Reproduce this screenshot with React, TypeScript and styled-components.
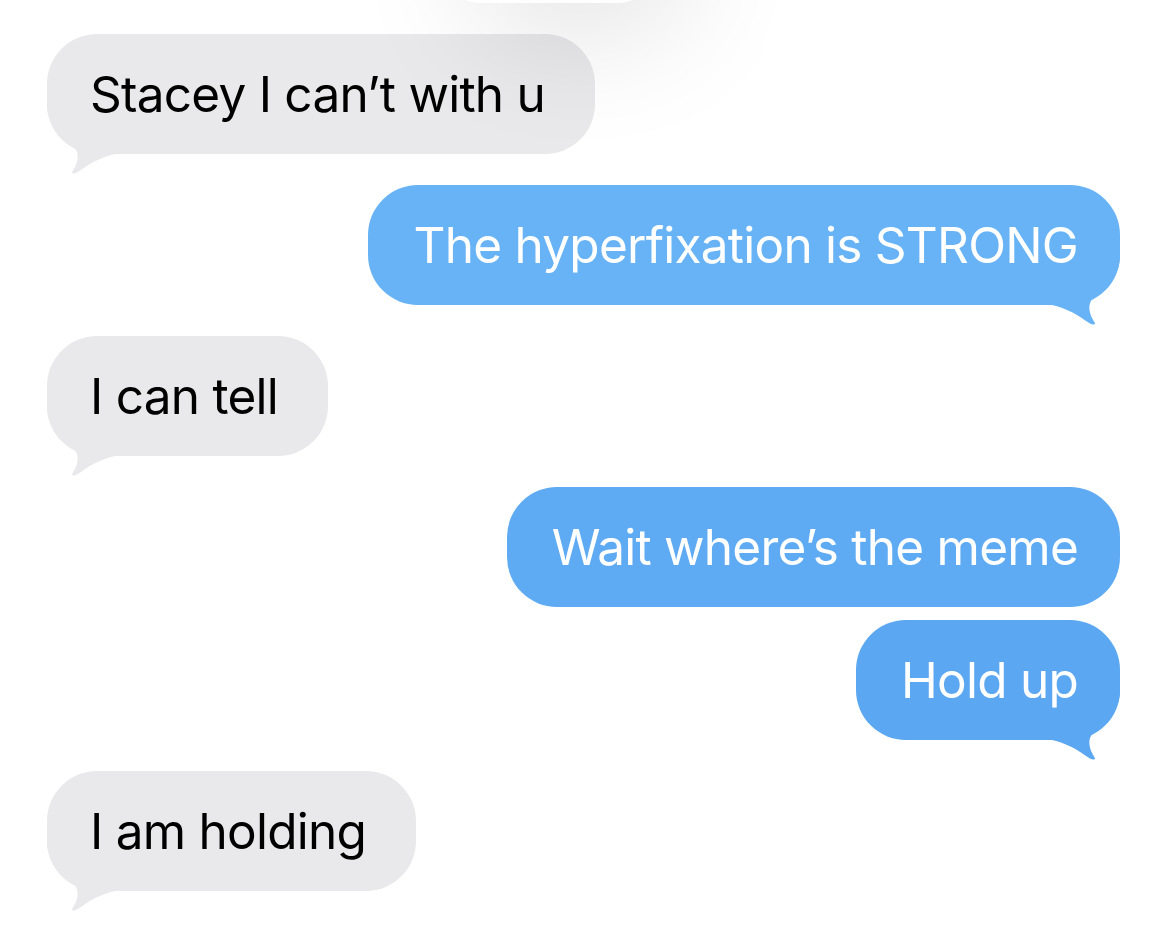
import React from "react";
import styled, { createGlobalStyle, css } from "styled-components";

const GlobalStyle = createGlobalStyle`
  html, body {
    margin: 0;
    padding: 0;
    background: #ffffff;
  }
  body {
    font-family: Inter, "Noto Sans", "Liberation Sans", sans-serif;
    -webkit-font-smoothing: antialiased;
  }
`;

// tail outlines, box is 80x72 sitting on the bubble's bottom corner
const TAIL_LEFT =
  "M0 0 L75 0 L75 49 C60 50 45 58 34 66 C30 69 25 71 25 68 C29 62 32 55 30 48 C27 40 15 32 6 22 C2 16 0 8 0 0 Z";
const TAIL_RIGHT =
  "M80 0 L5 0 L5 49 C20 50 35 58 46 66 C50 69 55 71 55 68 C51 62 48 55 50 48 C53 40 65 32 74 22 C78 16 80 8 80 0 Z";

const Screen = styled.div`
  position: relative;
  width: 1170px;
  height: 927px;
  overflow: hidden;
  background: #ffffff;
`;

const TopSheet = styled.div`
  position: absolute;
  top: -200px;
  left: 450px;
  width: 198px;
  height: 203px;
  border-radius: 28px;
  background: #ffffff;
  box-shadow: 30px 25px 130px rgba(0, 0, 0, 0.12);
  z-index: 2;
  pointer-events: none;
`;

const Thread = styled.div`
  display: flex;
  flex-direction: column;
  gap: 31px;
  padding: 34px 50px 0 47px;
`;

const Group = styled.div`
  display: flex;
  flex-direction: column;
  gap: 13px;
`;

type Side = "me" | "them";

const Bubble = styled.div<{ $side: Side; $tail?: boolean; $tone?: string }>`
  position: relative;
  z-index: 0;
  align-self: ${(p) => (p.$side === "me" ? "flex-end" : "flex-start")};
  padding: ${(p) => (p.$side === "me" ? "30px 42px 30px 45px" : "30px 50px 30px 43px")};
  border-radius: 50px;
  font-size: 49.5px;
  line-height: 60px;
  letter-spacing: -0.75px;
  white-space: nowrap;
  background: ${(p) => (p.$side === "me" ? p.$tone || "#5fabf3" : "#e9e9eb")};
  color: ${(p) => (p.$side === "me" ? "#ffffff" : "#000000")};

  ${(p) =>
    p.$tail &&
    css`
      &::after {
        content: "";
        position: absolute;
        z-index: -1;
        bottom: -22px;
        ${p.$side === "me" ? "right: 0;" : "left: 0;"}
        width: 80px;
        height: 72px;
        background: inherit;
        clip-path: path("${p.$side === "me" ? TAIL_RIGHT : TAIL_LEFT}");
      }
    `}
`;

const messages: { side: Side; lines: { text: string; tone?: string }[] }[] = [
  { side: "them", lines: [{ text: "Stacey I can’t with u" }] },
  { side: "me", lines: [{ text: "The hyperfixation is STRONG", tone: "#67b3f5" }] },
  { side: "them", lines: [{ text: "I can tell" }] },
  {
    side: "me",
    lines: [
      { text: "Wait where’s the meme", tone: "#5fabf3" },
      { text: "Hold up", tone: "#5ba7f2" },
    ],
  },
  { side: "them", lines: [{ text: "I am holding" }] },
];

export default function App() {
  return (
    <Screen>
      <GlobalStyle />
      <TopSheet />
      <Thread>
        {messages.map((group, gi) => (
          <Group key={gi}>
            {group.lines.map((line, li) => (
              <Bubble
                key={li}
                $side={group.side}
                $tone={line.tone}
                $tail={li === group.lines.length - 1}
              >
                {line.text}
              </Bubble>
            ))}
          </Group>
        ))}
      </Thread>
    </Screen>
  );
}
